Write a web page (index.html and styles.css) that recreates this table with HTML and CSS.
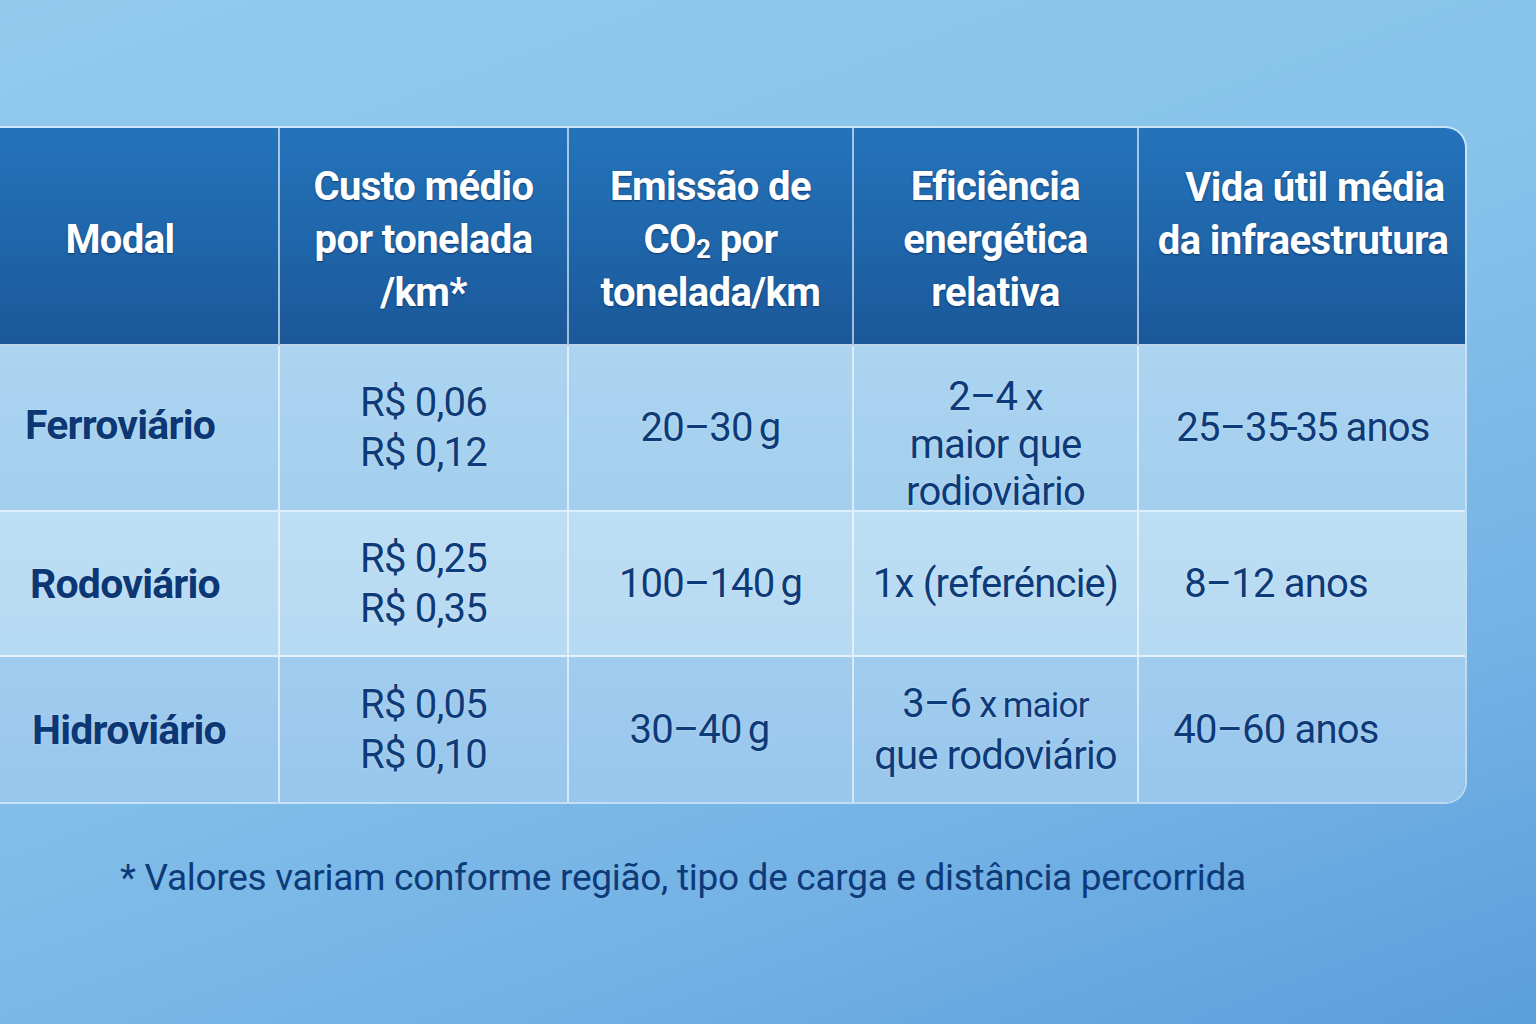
FILE: index.html
```html
<!DOCTYPE html>
<html lang="pt">
<head>
<meta charset="utf-8">
<title>Comparação de modais</title>
<link rel="stylesheet" href="styles.css">
</head>
<body>
<main class="page">
  <div class="table">
    <div class="cell head c1"><div>Modal</div></div>
    <div class="cell head c2"><div>Custo médio<br>por tonelada<br>/km*</div></div>
    <div class="cell head c3"><div>Emissão de<br>CO<sub>2</sub> por<br>tonelada/km</div></div>
    <div class="cell head c4"><div>Eficiência<br>energética<br>relativa</div></div>
    <div class="cell head c5 top"><div><span class="l1">Vida útil média</span><br>da infraestrutura</div></div>

    <div class="cell r1 name"><div>Ferroviário</div></div>
    <div class="cell r1"><div>R$ 0,06<br>R$ 0,12</div></div>
    <div class="cell r1"><div>20–30<span class="unit">g</span></div></div>
    <div class="cell r1 eff"><div><span class="first">2–4<span class="x">x</span></span><br>maior que<br>rodioviàrio</div></div>
    <div class="cell r1"><div>25–35<span class="tight">-35</span> anos</div></div>

    <div class="cell r2 name"><div>Rodoviário</div></div>
    <div class="cell r2"><div>R$ 0,25<br>R$ 0,35</div></div>
    <div class="cell r2"><div>100–140<span class="unit">g</span></div></div>
    <div class="cell r2"><div>1x (referéncie)</div></div>
    <div class="cell r2 shift"><div>8–12 anos</div></div>

    <div class="cell r3 name"><div>Hidroviário</div></div>
    <div class="cell r3"><div>R$ 0,05<br>R$ 0,10</div></div>
    <div class="cell r3 shift-s"><div>30–40<span class="unit">g</span></div></div>
    <div class="cell r3"><div>3–6<span class="x">x</span><span class="small">maior</span><br>que rodoviário</div></div>
    <div class="cell r3 shift"><div>40–60 anos</div></div>
  </div>
  <p class="note">* Valores variam conforme região, tipo de carga e distância percorrida</p>
</main>
</body>
</html>
```

FILE: styles.css
```css
html, body {
  margin: 0;
  padding: 0;
}
body {
  width: 1536px;
  height: 1024px;
  overflow: hidden;
  background: linear-gradient(160deg, #93caee 0%, #86c2ea 45%, #74b2e5 75%, #5a9edc 100%);
  font-family: Roboto, "Liberation Sans", sans-serif;
  color: #0d3a78;
}
.page {
  padding-top: 126px;
}
.table {
  display: grid;
  grid-template-columns: 282px 289px 285px 285px 328px;
  grid-template-rows: 218px 166px 145px 145px;
  width: 1469px;
  margin-left: -2px;
  box-sizing: border-box;
  border: 2px solid rgba(255, 255, 255, 0.55);
  border-left: none;
  border-radius: 0 22px 22px 0;
  overflow: hidden;
}
.cell {
  display: flex;
  align-items: center;
  justify-content: center;
  text-align: center;
  font-size: 40px;
  line-height: 50px;
  white-space: nowrap;
  border-right: 2px solid rgba(255, 255, 255, 0.6);
  border-bottom: 2px solid rgba(255, 255, 255, 0.6);
  letter-spacing: -0.8px;
  text-shadow: 0 0 2px rgba(255, 255, 255, 0.5);
}
.cell:nth-child(5n) {
  border-right: none;
}
.r3 {
  border-bottom: none;
}
.head {
  background: linear-gradient(180deg, #2473ba 0%, #1f65a9 55%, #1a5899 100%);
  color: #ffffff;
  font-weight: 700;
  line-height: 53px;
  letter-spacing: -0.6px;
  padding-top: 6px;
  text-shadow: 0 1px 2px rgba(0, 20, 60, 0.55);
  border-bottom: 2px solid rgba(255, 255, 255, 0.7);
}
.head.c1 {
  padding-right: 36px;
}
.head.top {
  align-items: flex-start;
  padding-top: 33px;
  padding-left: 0;
}
.head .l1 {
  margin-left: 24px;
}
.head sub {
  font-size: 26px;
  line-height: 0;
  vertical-align: -5px;
}
.r1 {
  background: linear-gradient(180deg, #abd4f0 0%, #a3cfee 100%);
}
.r2 {
  background: linear-gradient(180deg, #bddef4 0%, #b6daf2 100%);
}
.r3 {
  background: linear-gradient(180deg, #a0ccee 0%, #98c6ec 100%);
}
.name {
  font-size: 41px;
  font-weight: 700;
  letter-spacing: -0.8px;
  padding-right: 36px;
  color: #0b3775;
}
.r1.name { padding-bottom: 6px; }
.r2.name { padding-right: 26px; }
.r3.name { padding-right: 18px; }
.unit {
  margin-left: 6px;
}
.eff {
  line-height: 47px;
  padding-top: 32px;
}
.x {
  margin-left: 8px;
  font-size: 37px;
}
.small {
  font-size: 35px;
  margin-left: 6px;
}
.tight {
  margin-left: -2px;
  letter-spacing: -2px;
}
.shift {
  padding-right: 54px;
}
.shift-s {
  padding-right: 22px;
}
.note {
  margin: 52px 0 0 120px;
  font-size: 37px;
  line-height: 44px;
  letter-spacing: -0.3px;
  color: #0d3a78;
}
```
